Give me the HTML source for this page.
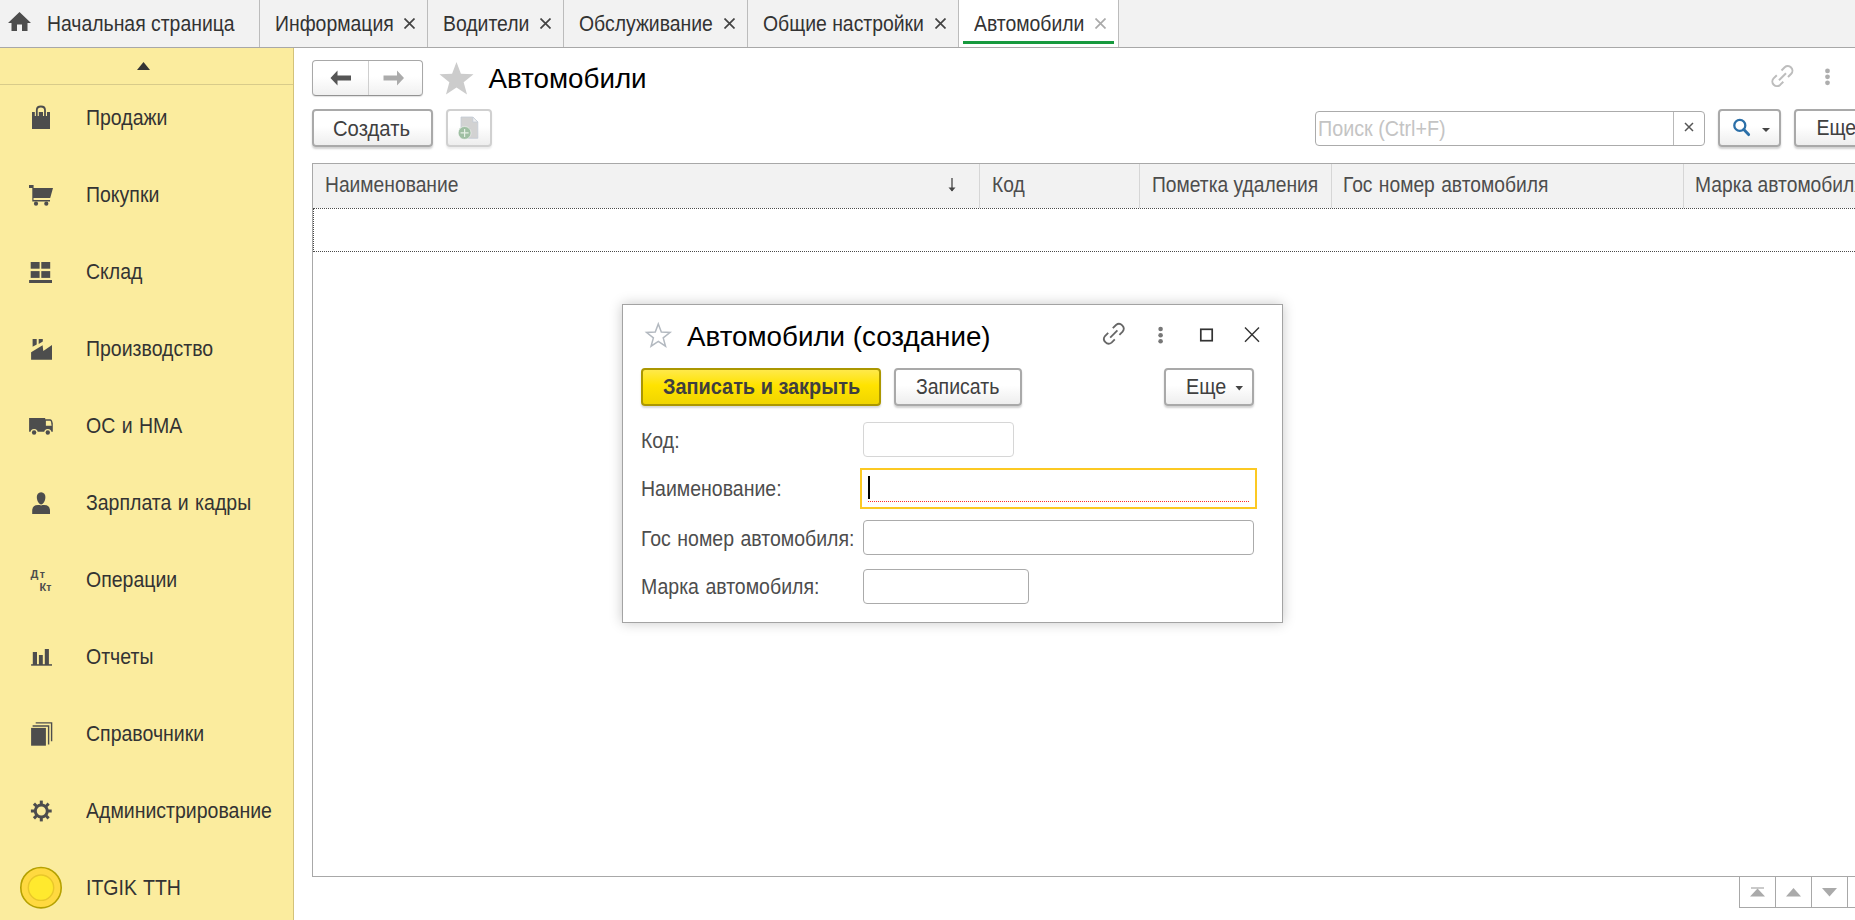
<!DOCTYPE html>
<html><head><meta charset="utf-8">
<style>
*{box-sizing:border-box;margin:0;padding:0}
html,body{width:1855px;height:920px;overflow:hidden;background:#fff;font-family:"Liberation Sans",sans-serif;color:#333}
.a{position:absolute}
.t{position:absolute;white-space:nowrap;line-height:1;transform:scaleY(1.1);transform-origin:0 84.6%}
#tabs{position:absolute;left:0;top:0;width:1855px;height:48px;background:#f2f2f2;border-bottom:1px solid #a8a8a8}
.sep{position:absolute;top:0;width:1px;height:47px;background:#bcbcbc}
.tabx{position:absolute;top:18px;width:11px;height:11px}
#side{position:absolute;left:0;top:48px;width:294px;height:872px;background:#fbec9e;border-right:1px solid #d3c27a}
.si{position:absolute;left:86px;font-size:19.5px;color:#333;word-spacing:1px}
.th{font-size:19.25px;color:#4d4d4d}
.lb{left:641px;font-size:19.5px;word-spacing:1px;color:#4d4d4d}
.btn{position:absolute;border:2px solid #a9a9a9;border-radius:4px;background:linear-gradient(#fff 0%,#fff 45%,#eeeeee 100%);box-shadow:0 2px 2px rgba(0,0,0,.18)}
</style></head>
<body>
<!-- TAB BAR -->
<div id="tabs">
  <svg class="a" style="left:8px;top:12px" width="23" height="19" viewBox="0 0 23 19"><path d="M11.5 0 L23 11 L19.5 11 L19.5 19 L14 19 L14 12.5 L9 12.5 L9 19 L3.5 19 L3.5 11 L0 11 Z" fill="#4d4d4d"/></svg>
  <div class="t" style="left:47px;top:15px;font-size:19.4px">Начальная страница</div>
  <div class="sep" style="left:259px"></div>
  <div class="t" style="left:275px;top:15px;font-size:19.4px">Информация</div>
  <svg class="tabx" style="left:404px"><path d="M0.5 0.5 L10.5 10.5 M10.5 0.5 L0.5 10.5" stroke="#444" stroke-width="1.7"/></svg>
  <div class="sep" style="left:427px"></div>
  <div class="t" style="left:443px;top:15px;font-size:19.4px">Водители</div>
  <svg class="tabx" style="left:540px"><path d="M0.5 0.5 L10.5 10.5 M10.5 0.5 L0.5 10.5" stroke="#444" stroke-width="1.7"/></svg>
  <div class="sep" style="left:563px"></div>
  <div class="t" style="left:579px;top:15px;font-size:19.4px">Обслуживание</div>
  <svg class="tabx" style="left:724px"><path d="M0.5 0.5 L10.5 10.5 M10.5 0.5 L0.5 10.5" stroke="#444" stroke-width="1.7"/></svg>
  <div class="sep" style="left:747px"></div>
  <div class="t" style="left:763px;top:15px;font-size:19.4px">Общие настройки</div>
  <svg class="tabx" style="left:935px"><path d="M0.5 0.5 L10.5 10.5 M10.5 0.5 L0.5 10.5" stroke="#444" stroke-width="1.7"/></svg>
  <div class="sep" style="left:958px"></div>
  <div class="a" style="left:959px;top:0;width:159px;height:47px;background:#fff"></div>
  <div class="a" style="left:963px;top:41px;width:151px;height:3px;background:#179a3e"></div>
  <div class="t" style="left:974px;top:15px;font-size:19.4px">Автомобили</div>
  <svg class="tabx" style="left:1095px"><path d="M0.5 0.5 L10.5 10.5 M10.5 0.5 L0.5 10.5" stroke="#aaa" stroke-width="1.7"/></svg>
  <div class="sep" style="left:1118px"></div>
</div>

<!-- SIDEBAR -->
<div id="side"></div>
<div class="a" style="left:0;top:84px;width:293px;height:1px;background:#d8cb8a"></div>
<svg class="a" style="left:0;top:0" width="294" height="920">
 <g fill="#4d4d4d">
  <path d="M137 70 L143.5 62 L150 70 Z" fill="#333"/>
  <!-- bag -->
  <rect x="32" y="112" width="18" height="17"/>
  <path d="M36.8 116 V110 Q36.8 106.5 40.9 106.5 Q45 106.5 45 110 V116" fill="none" stroke="#fbec9e" stroke-width="4"/>
  <path d="M36.8 116 V110 Q36.8 106.5 40.9 106.5 Q45 106.5 45 110 V116" fill="none" stroke="#4d4d4d" stroke-width="1.8"/>
  <!-- cart -->
  <path d="M29 185 H33.6 V188 H53 L50.2 198 H33.5 V200 H50 V201.5 H32.3 V188 H29 Z"/>
  <circle cx="36" cy="203.7" r="2.1"/><circle cx="46.3" cy="203.7" r="2.1"/>
  <!-- warehouse -->
  <rect x="30.7" y="262" width="8.9" height="6.7"/><rect x="41.3" y="262" width="8.9" height="6.7"/>
  <rect x="30.7" y="271.1" width="8.9" height="6.8"/><rect x="41.3" y="271.1" width="8.9" height="6.8"/>
  <rect x="29.1" y="280" width="22.9" height="3"/>
  <!-- factory -->
  <path d="M32.6 339 H36.7 V344.4 L32.6 346.8 Z"/>
  <path d="M38.7 339 H42.8 V341.6 L38.7 344 Z"/>
  <path d="M31.1 352.3 L42.6 345.3 L43.3 351 L52 344.9 V359.7 H31.1 Z"/>
  <!-- truck -->
  <path d="M29.1 418 H45.2 V419.3 H50.3 Q51.5 419.3 52.1 420.8 L52.8 423.3 V431.7 H29.1 Z"/>
  <path d="M45.9 420.8 H50 Q50.6 420.8 51 421.8 L51.6 425.8 H45.9 Z" fill="#fbec9e"/>
  <circle cx="34.1" cy="432.5" r="3.6" fill="#fbec9e"/><circle cx="47.8" cy="432.5" r="3.6" fill="#fbec9e"/>
  <circle cx="34.1" cy="432.5" r="2.2"/><circle cx="47.8" cy="432.5" r="2.2"/>
  <!-- person -->
  <path d="M32.2 514 V511 Q32.2 505 38 505 H44.2 Q50 505 50 511 V514 Z"/>
  <ellipse cx="41.1" cy="498.4" rx="5.3" ry="7" fill="#fbec9e"/>
  <path d="M41.1 492.3 C44 492.3 45.4 494.5 45.4 497 C45.4 500.5 43.3 504.5 41.1 504.5 C38.9 504.5 36.8 500.5 36.8 497 C36.8 494.5 38.2 492.3 41.1 492.3 Z"/>
  <!-- Dt Kt -->
  <text x="30.6" y="577.8" font-family="Liberation Sans" font-weight="bold" font-size="11">Д</text>
  <text x="39.8" y="577.8" font-family="Liberation Sans" font-weight="bold" font-size="10.5">т</text>
  <text x="39.6" y="591" font-family="Liberation Sans" font-weight="bold" font-size="11">К</text>
  <text x="46.2" y="591" font-family="Liberation Sans" font-weight="bold" font-size="10.5">т</text>
  <!-- reports -->
  <rect x="32.8" y="652" width="4.2" height="13"/><rect x="38.9" y="655" width="3.9" height="10"/><rect x="44.8" y="649" width="4.1" height="16"/>
  <rect x="31.1" y="664.2" width="20.9" height="1.5"/>
  <!-- catalogs -->
  <rect x="31.1" y="727.9" width="14.8" height="17.8"/>
  <path d="M32.6 726 H48.6 V744.4 M35.7 722.9 H51.6 V741.2" fill="none" stroke="#4d4d4d" stroke-width="1.4"/>
  <!-- gear -->
  <circle cx="41.3" cy="811" r="6" fill="none" stroke="#4d4d4d" stroke-width="3"/>
  <rect x="39.8" y="800.6" width="3" height="4" transform="rotate(0 41.3 811)"/><rect x="39.8" y="800.6" width="3" height="4" transform="rotate(45 41.3 811)"/><rect x="39.8" y="800.6" width="3" height="4" transform="rotate(90 41.3 811)"/><rect x="39.8" y="800.6" width="3" height="4" transform="rotate(135 41.3 811)"/><rect x="39.8" y="800.6" width="3" height="4" transform="rotate(180 41.3 811)"/><rect x="39.8" y="800.6" width="3" height="4" transform="rotate(225 41.3 811)"/><rect x="39.8" y="800.6" width="3" height="4" transform="rotate(270 41.3 811)"/><rect x="39.8" y="800.6" width="3" height="4" transform="rotate(315 41.3 811)"/>
 </g>
 <!-- ITGIK -->
 <circle cx="41" cy="887.7" r="20.2" fill="#ffd940" stroke="#b5a100" stroke-width="1.6"/>
 <circle cx="41" cy="887.7" r="12.7" fill="#ffe92e" stroke="#e9c72a" stroke-width="1.4"/>
</svg>
<div class="t si" style="top:109px">Продажи</div>
<div class="t si" style="top:186px">Покупки</div>
<div class="t si" style="top:263px">Склад</div>
<div class="t si" style="top:340px">Производство</div>
<div class="t si" style="top:417px">ОС и НМА</div>
<div class="t si" style="top:494px">Зарплата и кадры</div>
<div class="t si" style="top:571px">Операции</div>
<div class="t si" style="top:648px">Отчеты</div>
<div class="t si" style="top:725px">Справочники</div>
<div class="t si" style="top:802px">Администрирование</div>
<div class="t si" style="top:879px">ITGIK TTH</div>

<!-- PAGE -->
<!-- nav group -->
<div class="a" style="left:312px;top:60px;width:111px;height:36px;border:1px solid #a8a8a8;border-bottom-color:#939393;border-radius:4px;background:linear-gradient(#fff 0%,#fff 45%,#f0f0f0 100%);box-shadow:0 1px 1px rgba(0,0,0,.12)"></div>
<div class="a" style="left:368px;top:61px;width:1px;height:34px;background:#cfcfcf"></div>
<svg class="a" style="left:0;top:0" width="1855" height="160">
  <path d="M330.5 78 L337.5 70.5 V75.6 H351 V80.4 H337.5 V85.5 Z" fill="#555"/>
  <path d="M404 78 L397 70.5 V75.6 H383.5 V80.4 H397 V85.5 Z" fill="#ababab"/>
  <path d="M456.50 62.00 L460.92 73.82 L473.52 74.37 L463.65 82.22 L467.02 94.38 L456.50 87.42 L445.98 94.38 L449.35 82.22 L439.48 74.37 L452.08 73.82 Z" fill="#cccccc"/>
  <!-- link icon -->
  <g fill="none" stroke="#bdbdbd" stroke-width="2" stroke-linecap="butt">
    <path d="M1781.5 70.5 L1784.7 67.3 A4.6 4.6 0 0 1 1791.2 73.8 L1788 77"/>
    <path d="M1776.8 75.2 L1773.6 78.4 A4.6 4.6 0 0 0 1780.1 84.9 L1783.3 81.7"/>
    <path d="M1779 80.2 L1786 73.2"/>
  </g>
  <circle cx="1827.5" cy="70.9" r="2.4" fill="#adadad"/><circle cx="1827.5" cy="76.8" r="2.4" fill="#adadad"/><circle cx="1827.5" cy="82.8" r="2.4" fill="#adadad"/>
</svg>
<div class="t" style="transform:none;left:488.5px;top:65px;font-size:27.75px;color:#000">Автомобили</div>

<!-- buttons row -->
<div class="btn" style="left:312px;top:109px;width:121px;height:38px"></div>
<div class="t" style="left:333px;top:119px;font-size:20.25px;color:#404040">Создать</div>
<div class="btn" style="left:446px;top:109px;width:46px;height:38px;border-color:#d0d0d0;box-shadow:0 2px 2px rgba(0,0,0,.08)"></div>
<svg class="a" style="left:455px;top:112px" width="30" height="32" viewBox="455 112 30 32">
  <path d="M461 117 H472.8 L477.8 122 V138.3 H461 Z" fill="#d2d2d2" stroke="#c4ccd6" stroke-width="0.8"/>
  <path d="M472.8 117 V122 H477.8 Z" fill="#f0f0f0" stroke="#c4ccd6" stroke-width="0.8"/>
  <circle cx="464.6" cy="132.9" r="6.4" fill="#9fbfa3" stroke="#fff" stroke-width="0.5"/>
  <path d="M464.6 128.9 V136.9 M460.6 132.9 H468.6" stroke="#e6f0e6" stroke-width="1.2"/>
</svg>

<!-- search -->
<div class="a" style="left:1315px;top:111px;width:390px;height:35px;border:1px solid #ababab;border-radius:4px;background:#fff"></div>
<div class="a" style="left:1673px;top:112px;width:1px;height:33px;background:#b9b9b9"></div>
<div class="t" style="left:1318px;top:119.5px;font-size:19.75px;color:#c4c4c4">Поиск (Ctrl+F)</div>
<svg class="a" style="left:1684px;top:122px" width="10" height="10"><path d="M1 1 L9 9 M9 1 L1 9" stroke="#555" stroke-width="1.5"/></svg>
<div class="btn" style="left:1718px;top:109px;width:63px;height:38px"></div>
<svg class="a" style="left:1728px;top:115px" width="48" height="28" viewBox="1728 115 48 28">
  <circle cx="1739.8" cy="125.4" r="5.5" fill="none" stroke="#2b6fa8" stroke-width="2.3"/>
  <path d="M1743.8 129.6 L1748.6 134.6" stroke="#2b6fa8" stroke-width="2.9" stroke-linecap="round"/>
  <path d="M1762 128 H1770 L1766 132 Z" fill="#444"/>
</svg>
<div class="btn" style="left:1794px;top:109px;width:80px;height:38px"></div>
<div class="t" style="left:1816.5px;top:119px;font-size:19.5px;color:#404040">Еще</div>

<!-- table -->
<div class="a" style="left:312px;top:163px;width:1560px;height:714px;border:1px solid #a8a8a8;background:#fff"></div>
<div class="a" style="left:313px;top:164px;width:1550px;height:44px;background:#f2f2f2"></div>
<div class="a" style="left:313px;top:208px;width:1550px;height:0;border-top:1px dotted #4a4a4a"></div>
<div class="a" style="left:313px;top:251px;width:1550px;height:0;border-top:1px dotted #4a4a4a"></div>
<div class="a" style="left:313px;top:208px;width:0;height:44px;border-left:1px dotted #4a4a4a"></div>
<div class="a" style="left:979px;top:164px;width:1px;height:44px;background:#d6d6d6"></div>
<div class="a" style="left:1139px;top:164px;width:1px;height:44px;background:#d6d6d6"></div>
<div class="a" style="left:1331px;top:164px;width:1px;height:44px;background:#d6d6d6"></div>
<div class="a" style="left:1683px;top:164px;width:1px;height:44px;background:#d6d6d6"></div>
<div class="t th" style="left:325px;top:176px">Наименование</div>
<svg class="a" style="left:946px;top:177px" width="12" height="16"><path d="M6 1 V14" stroke="#444" stroke-width="1.3"/><path d="M2.5 10.5 L6 14.5 L9.5 10.5 Z" fill="#444"/></svg>
<div class="t th" style="left:992px;top:176px">Код</div>
<div class="t th" style="left:1152px;top:176px">Пометка удаления</div>
<div class="t th" style="left:1343px;top:176px;word-spacing:1px">Гос номер автомобиля</div>
<div class="t th" style="left:1695px;top:176px">Марка автомобиля</div>

<!-- pagination -->
<div class="a" style="left:1739px;top:876px;width:120px;height:32px;border:1px solid #a8a8a8;background:#fff"></div>
<div class="a" style="left:1775px;top:876px;width:1px;height:32px;background:#a8a8a8"></div>
<div class="a" style="left:1811px;top:876px;width:1px;height:32px;background:#a8a8a8"></div>
<div class="a" style="left:1847px;top:876px;width:1px;height:32px;background:#a8a8a8"></div>
<svg class="a" style="left:1739px;top:876px" width="116" height="32" viewBox="1739 876 116 32">
  <rect x="1751" y="887.3" width="13" height="1.4" fill="#b4b4b4"/>
  <path d="M1757.5 888.6 L1765 896.6 H1750 Z" fill="#aaa"/>
  <path d="M1793.5 888 L1801 896.6 H1786 Z" fill="#aaa"/>
  <path d="M1822 888 H1837 L1829.5 896.6 Z" fill="#aaa"/>
</svg>

<!-- DIALOG -->
<div class="a" style="left:622px;top:304px;width:661px;height:319px;border:1px solid #a3a3a3;background:#fff;box-shadow:0 0 12px rgba(0,0,0,.22)"></div>
<svg class="a" style="left:622px;top:304px" width="661" height="60" viewBox="622 304 661 60">
  <path d="M658.30 324.00 L661.34 332.12 L670.00 332.50 L663.21 337.90 L665.53 346.25 L658.30 341.47 L651.07 346.25 L653.39 337.90 L646.60 332.50 L655.26 332.12 Z" fill="none" stroke="#b3b9c0" stroke-width="1.5" stroke-linejoin="miter"/>
  <g fill="none" stroke="#666" stroke-width="1.8">
    <path d="M1112.8 328.2 L1116 325 A4.7 4.7 0 0 1 1122.6 331.6 L1119.4 334.8"/>
    <path d="M1108.2 332.8 L1105 336 A4.7 4.7 0 0 0 1111.6 342.6 L1114.8 339.4"/>
    <path d="M1110.2 337.6 L1117.4 330.4"/>
  </g>
  <circle cx="1160.6" cy="329" r="2.3" fill="#777"/><circle cx="1160.6" cy="335.2" r="2.3" fill="#777"/><circle cx="1160.6" cy="341.3" r="2.3" fill="#777"/>
  <rect x="1200.8" y="329.3" width="11.4" height="11.4" fill="none" stroke="#333" stroke-width="1.7"/>
  <path d="M1245 327.6 L1259 341.8 M1259 327.6 L1245 341.8" stroke="#333" stroke-width="1.4"/>
</svg>
<div class="t" style="transform:none;left:687px;top:323px;font-size:27.75px;color:#000">Автомобили (создание)</div>

<div class="a" style="left:641px;top:368px;width:240px;height:38px;border:2px solid #ab9700;border-radius:4px;background:linear-gradient(#ffe94a 0%,#ffe300 45%,#f0d500 100%);box-shadow:0 2px 2px rgba(0,0,0,.15)"></div>
<div class="t" style="left:663px;top:378px;font-size:19.9px;font-weight:bold;color:#3f3f3f">Записать и закрыть</div>
<div class="btn" style="left:894px;top:368px;width:128px;height:38px"></div>
<div class="t" style="left:916px;top:378px;font-size:19.5px;color:#404040">Записать</div>
<div class="btn" style="left:1164px;top:368px;width:90px;height:38px"></div>
<div class="t" style="left:1186px;top:378px;font-size:19.75px;color:#404040">Еще</div>
<svg class="a" style="left:1234px;top:384px" width="10" height="8"><path d="M1.5 2 H9 L5.25 6.5 Z" fill="#444"/></svg>

<div class="t lb" style="top:431.5px">Код:</div>
<div class="t lb" style="top:480px">Наименование:</div>
<div class="t lb" style="top:529.5px">Гос номер автомобиля:</div>
<div class="t lb" style="top:578px">Марка автомобиля:</div>

<div class="a" style="left:863px;top:422px;width:151px;height:35px;border:1px solid #d6d6d6;border-radius:4px"></div>
<div class="a" style="left:860px;top:468px;width:397px;height:41px;border:2px solid #fcc923"></div>
<div class="a" style="left:868px;top:476px;width:2px;height:23px;background:#000"></div>
<div class="a" style="left:868px;top:501px;width:381px;height:0;border-top:1px dotted #ff2a2a"></div>
<div class="a" style="left:863px;top:520px;width:391px;height:35px;border:1px solid #ababab;border-radius:4px"></div>
<div class="a" style="left:863px;top:569px;width:166px;height:35px;border:1px solid #ababab;border-radius:4px"></div>
</body></html>
